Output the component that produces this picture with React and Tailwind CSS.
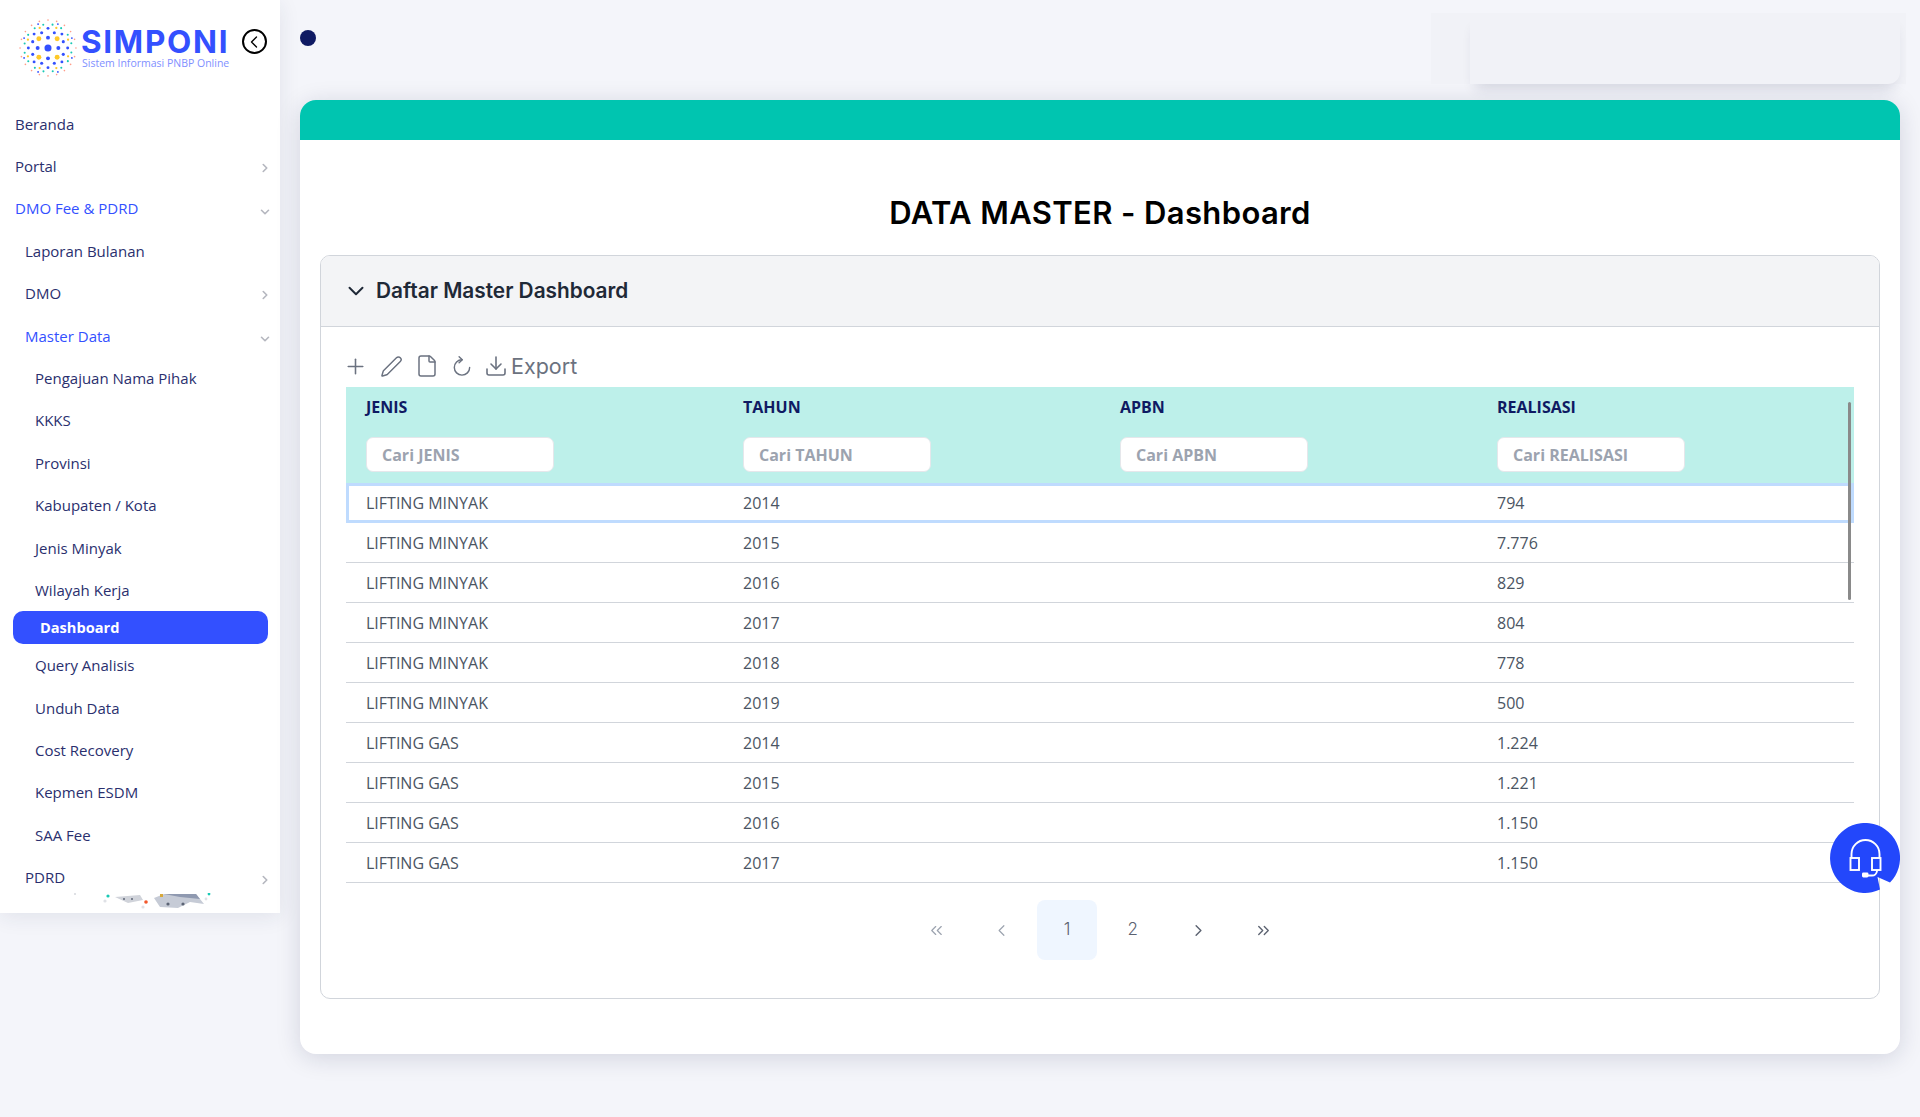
import React from "react";
import { Plus, Pen, File, Download, ChevronDown, ChevronRight, ChevronLeft, ChevronsLeft, ChevronsRight } from "lucide-react";

const sans = "font-['Open_Sans','Noto_Sans',sans-serif]";
const display = "font-['Inter','Liberation_Sans',sans-serif]";

function Logo() {
  const rings = [
    { r: 10, n: 4, o: 0, s: 1.9, c: "#3350ff" },
    { r: 12.5, n: 4, o: 45, s: 2.4, c: "#ffc928" },
    { r: 16, n: 8, o: 22.5, s: 1.5, c: "#3350ff" },
    { r: 19, n: 8, o: 0, s: 1.4, c: "#3350ff" },
    { r: 21, n: 8, o: 22.5, s: 1.1, c: "#ffc928" },
    { r: 23, n: 16, o: 11, s: 1, c: "#19c9b5" },
    { r: 27, n: 20, o: 0, s: 0.8, c: "#ff9d8a" },
    { r: 25, n: 8, o: 22.5, s: 0.9, c: "#3350ff" },
  ];
  return (
    <svg width="60" height="60" viewBox="0 0 58 58" className="shrink-0">
      <circle cx="29" cy="29" r="3.4" fill="#3350ff" />
      {rings.map((g, i) =>
        Array.from({ length: g.n }).map((_, k) => {
          const a = ((g.o + (k * 360) / g.n) * Math.PI) / 180;
          return <circle key={i + "-" + k} cx={29 + g.r * Math.cos(a)} cy={29 + g.r * Math.sin(a)} r={g.s} fill={g.c} />;
        })
      )}
    </svg>
  );
}

function NavRow({ label, pad, color = "text-[#2a2f6e]", chev }) {
  return (
    <div className={`h-[42.4px] flex items-center justify-between pr-[8px] ${pad}`}>
      <span className={`text-[15px] ${color}`}>{label}</span>
      {chev === "r" && <ChevronRight size={14} strokeWidth={2.8} className="text-[#b5b7bf] mt-1" />}
      {chev === "d" && <ChevronDown size={14} strokeWidth={2.8} className="text-[#b5b7bf] mt-1.5" />}
    </div>
  );
}

function Sidebar() {
  return (
    <aside className={`w-[280px] h-[913px] shrink-0 bg-white shadow-[0_4px_20px_rgba(30,40,80,0.09)] overflow-hidden ${sans}`}>
      <div className="h-[102.7px] flex items-start">
        <div className="ml-[18px] mt-[18px]"><Logo /></div>
        <div className="ml-[3px] mt-[28px] w-[150px]">
          <div className={`text-[31.5px] leading-[28px] font-bold text-[#3350ff] tracking-[1.7px] ${display}`}>SIMPONI</div>
          <div className="text-[10.5px] leading-[12px] text-[#7f90ff] mt-[1px] ml-[1px] whitespace-nowrap">Sistem Informasi PNBP Online</div>
        </div>
        <div className="ml-[11px] mt-[29px] w-[25px] h-[25px] rounded-full border-2 border-black flex items-center justify-center">
          <ChevronLeft size={20} strokeWidth={1.6} className="text-black -ml-[1px]" />
        </div>
      </div>
      <NavRow label="Beranda" pad="pl-[15px]" />
      <NavRow label="Portal" pad="pl-[15px]" chev="r" />
      <NavRow label="DMO Fee & PDRD" pad="pl-[15px]" color="text-[#3350ff] font-medium" chev="d" />
      <NavRow label="Laporan Bulanan" pad="pl-[25px]" />
      <NavRow label="DMO" pad="pl-[25px]" chev="r" />
      <NavRow label="Master Data" pad="pl-[25px]" color="text-[#3350ff] font-medium" chev="d" />
      <NavRow label="Pengajuan Nama Pihak" pad="pl-[35px]" />
      <NavRow label="KKKS" pad="pl-[35px]" />
      <NavRow label="Provinsi" pad="pl-[35px]" />
      <NavRow label="Kabupaten / Kota" pad="pl-[35px]" />
      <NavRow label="Jenis Minyak" pad="pl-[35px]" />
      <NavRow label="Wilayah Kerja" pad="pl-[35px]" />
      <div className="h-[33px] ml-[13px] w-[255px] rounded-[10px] bg-[#3350ff] flex items-center pl-[27px] text-[14.6px] font-bold text-white">Dashboard</div>
      <NavRow label="Query Analisis" pad="pl-[35px]" />
      <NavRow label="Unduh Data" pad="pl-[35px]" />
      <NavRow label="Cost Recovery" pad="pl-[35px]" />
      <NavRow label="Kepmen ESDM" pad="pl-[35px]" />
      <NavRow label="SAA Fee" pad="pl-[35px]" />
      <NavRow label="PDRD" pad="pl-[25px]" chev="r" />
      <svg width="280" height="18" viewBox="0 0 280 18" className="-mt-[6px] block">
        <circle cx="75" cy="1" r="1" fill="#d5d7dc" />
        <circle cx="108" cy="3" r="1.6" fill="#19c9b5" />
        <circle cx="105" cy="8" r="1.6" fill="#dfe1e6" />
        <path d="M115 4 L140 2 L143 7 L128 10 Z" fill="#d0d3da" />
        <circle cx="124" cy="6" r="1" fill="#5c6475" />
        <circle cx="132" cy="6" r="1" fill="#5c6475" />
        <circle cx="146" cy="9" r="1.8" fill="#f2582c" />
        <circle cx="143" cy="14" r="1.6" fill="#dfe1e6" />
        <path d="M154 5 L164 1 L196 1 L204 11 L190 9 L178 15 L160 14 Z" fill="#c6cbd6" />
        <path d="M164 1 L196 1 L200 6 L180 4 Z" fill="#8f99b0" />
        <circle cx="168" cy="11" r="1.6" fill="#5c6475" />
        <circle cx="183" cy="11" r="1.6" fill="#5c6475" />
        <rect x="160" y="1" width="3" height="3" fill="#d7a83a" />
        <circle cx="209" cy="1" r="1.4" fill="#19c9b5" />
        <circle cx="206" cy="6" r="1.4" fill="#dfe1e6" />
      </svg>
    </aside>
  );
}

function Headset() {
  return (
    <svg width="70" height="70" viewBox="0 0 70 70" className="block">
      <path d="M50 66.6 A35 35 0 1 1 60 59.5 L47.5 54 Z" fill="#2347fb" />
      <g fill="none" stroke="#fff" strokeWidth="1.9">
        <path d="M21.5 35 V31 a14 14 0 0 1 28 0 V35" />
        <rect x="20.5" y="35" width="8.5" height="12" />
        <rect x="42" y="35" width="8.5" height="12" />
        <path d="M47 47 v1 a5 5 0 0 1 -5 4.5 H37" />
      </g>
      <rect x="32" y="49.5" width="6.5" height="5" rx="1.4" fill="#fff" />
    </svg>
  );
}

function Refresh() {
  return (
    <svg width="23" height="23" viewBox="0 0 24 24" fill="none" stroke="currentColor" strokeWidth="1.5" strokeLinecap="round" strokeLinejoin="round" className="-ml-[1px]">
      <path d="M12.5 5 a8 8 0 1 0 8 8" />
      <path d="M9.5 1.8 L12.8 5 L9.5 8.2" />
    </svg>
  );
}

const rows = [
  ["LIFTING MINYAK", "2014", "794"],
  ["LIFTING MINYAK", "2015", "7.776"],
  ["LIFTING MINYAK", "2016", "829"],
  ["LIFTING MINYAK", "2017", "804"],
  ["LIFTING MINYAK", "2018", "778"],
  ["LIFTING MINYAK", "2019", "500"],
  ["LIFTING GAS", "2014", "1.224"],
  ["LIFTING GAS", "2015", "1.221"],
  ["LIFTING GAS", "2016", "1.150"],
  ["LIFTING GAS", "2017", "1.150"],
];

function Table() {
  const cols = ["JENIS", "TAHUN", "APBN", "REALISASI"];
  return (
    <div className={`relative ${sans}`}>
      <div className="grid grid-cols-4 bg-[#bdf0ea] h-[96px]">
        {cols.map((c) => (
          <div key={c} className="pl-5 pt-[10px]">
            <div className="text-[16px] leading-[20px] font-bold text-[#0f1a63]">{c}</div>
            <div className="mt-[20px] w-[188px] h-[35px] rounded-[7px] bg-white border border-[#e5e7eb] pl-[15px] flex items-center text-[16px] font-bold text-[#9ca3af]">
              Cari {c}
            </div>
          </div>
        ))}
      </div>
      {rows.map((r, i) => (
        <div
          key={i}
          className={`grid grid-cols-4 h-[40px] text-[16px] text-[#4b5563] items-center ${
            i === 0 ? "ring-[3px] ring-inset ring-[#bfdbfe]" : "border-b border-[#d1d5db]"
          }`}
        >
          <div className="pl-5">{r[0]}</div>
          <div className="pl-5">{r[1]}</div>
          <div className="pl-5"></div>
          <div className="pl-5">{r[2]}</div>
        </div>
      ))}
      <div className="absolute right-[3px] top-[15px] w-[3px] h-[198px] bg-[#8a8a8a] rounded-sm" />
    </div>
  );
}

function Pagination() {
  const cell = "w-[60px] h-[60px] flex items-center justify-center rounded-[8px]";
  return (
    <div className={`flex justify-center gap-[5.6px] mt-[17px] text-[17px] font-light text-[#5b6270] ${display}`}>
      <div className={`${cell} text-[#9ca3af]`}><ChevronsLeft size={19} strokeWidth={1.5} /></div>
      <div className={`${cell} text-[#9ca3af]`}><ChevronLeft size={19} strokeWidth={1.5} /></div>
      <div className={`${cell} bg-[#eff6ff]`}>1</div>
      <div className={cell}>2</div>
      <div className={cell}><ChevronRight size={19} strokeWidth={1.8} /></div>
      <div className={cell}><ChevronsRight size={19} strokeWidth={1.7} /></div>
    </div>
  );
}

export default function App() {
  return (
    <div className="relative w-[1920px] h-[1117px] bg-[#f4f5fa] flex overflow-hidden">
      <Sidebar />
      <main className="flex-1 min-w-0 pl-5 pr-5">
        <header className="h-[100px] flex justify-between">
          <div className="w-4 h-4 rounded-full bg-[#0f1a63] mt-[30px] ml-0" />
          <div className="relative w-[475px] h-[71px] mt-[13px] -mr-[6px] bg-[#f1f2f7]">
            <div className="absolute left-[39px] right-[6px] top-0 bottom-0 rounded-br-[12px] shadow-[0_10px_14px_-6px_rgba(30,40,80,0.16)]" />
          </div>
        </header>
        <section className="h-[954px] bg-white rounded-[16px] overflow-hidden shadow-[0_4px_24px_rgba(20,30,70,0.15)]">
          <div className="h-10 bg-[#00c5b0]" />
          <h1 className={`text-center text-[31px] leading-[40px] font-semibold text-black tracking-[0.37px] mt-[53px] ${display}`}>DATA MASTER - Dashboard</h1>
          <div className="mx-5 mt-[22px] h-[744px] rounded-[10px] border border-[#d1d5db] overflow-hidden">
            <div className="h-[71px] bg-[#f3f4f6] border-b border-[#d1d5db] flex items-center pl-[22px]">
              <ChevronDown size={26} strokeWidth={1.8} className="text-[#1f2937]" />
              <span className={`ml-[7px] text-[20.8px] font-semibold text-[#1f2937] ${display}`}>Daftar Master Dashboard</span>
            </div>
            <div className="mx-[25px]">
              <div className="h-[60px] flex items-center gap-[12px] text-[#6b7280] pt-[18px]">
                <Plus size={25} strokeWidth={1.5} className="-ml-[3px]" />
                <Pen size={23} strokeWidth={1.5} />
                <File size={24} strokeWidth={1.5} />
                <Refresh />
                <div className="flex items-center gap-[3px] -ml-[1px]">
                  <Download size={24} strokeWidth={1.6} />
                  <span className={`text-[21.5px] ${display} font-normal`}>Export</span>
                </div>
              </div>
              <Table />
              <Pagination />
            </div>
          </div>
        </section>
      </main>
      <div className="absolute left-[1830px] top-[823px]"><Headset /></div>
    </div>
  );
}
